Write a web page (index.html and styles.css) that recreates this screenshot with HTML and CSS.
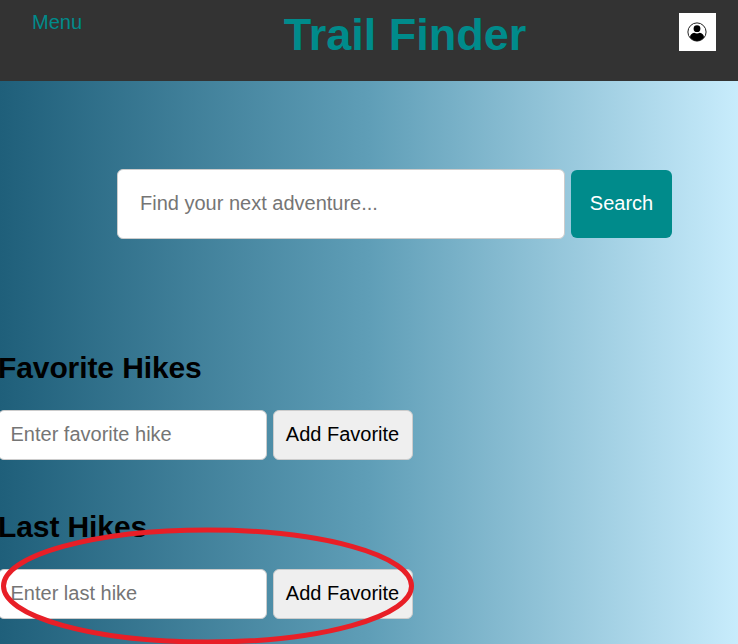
FILE: index.html
```html
<!DOCTYPE html>
<html lang="en">
<head>
<meta charset="utf-8">
<title>Trail Finder</title>
<link rel="stylesheet" href="styles.css">
</head>
<body>
<header class="topbar">
  <a class="menu">Menu</a>
  <h1 class="title">Trail Finder</h1>
  <button class="account" aria-label="Account">
    <svg class="account-icon" viewBox="0 0 20 20">
      <circle cx="10" cy="10" r="9.1" fill="none" stroke="#222" stroke-width="1"/>
      <circle cx="10" cy="6.7" r="3.4"/>
      <path d="M3 15.6C3 12.5 5 11 7.2 10.7Q10 12.2 12.8 10.7C15 11 17 12.5 17 15.6Q14 19 10 19T3 15.6Z"/>
    </svg>
  </button>
</header>
<main>
  <form class="search">
    <input class="field search-field" type="text" placeholder="Find your next adventure...">
    <button class="search-button" type="button">Search</button>
  </form>
  <section class="hikes">
    <h2 class="heading">Favorite Hikes</h2>
    <div class="row">
      <input class="field hike-field" type="text" placeholder="Enter favorite hike">
      <button class="add-button" type="button">Add Favorite</button>
    </div>
  </section>
  <section class="hikes">
    <h2 class="heading">Last Hikes</h2>
    <div class="row">
      <input class="field hike-field" type="text" placeholder="Enter last hike">
      <button class="add-button" type="button">Add Favorite</button>
    </div>
  </section>
</main>
<svg class="highlight" viewBox="0 0 414 118">
  <ellipse cx="207.5" cy="59" rx="204" ry="56" fill="none" stroke="#e81f27" stroke-width="5"/>
</svg>
</body>
</html>
```
FILE: styles.css
```css
* {
  box-sizing: border-box;
}

body {
  position: relative;
  height: 644px;
  margin: 0;
  overflow: hidden;
  font: 20px/24px "Liberation Sans", Arial, sans-serif;
  color: #000;
  background: linear-gradient(to right, #1f5f7a, #5f9eb7 50%, #c8ecfc);
}

.topbar {
  display: flex;
  justify-content: space-between;
  align-items: flex-start;
  height: 81px;
  padding: 10px 22px 0 32px;
  background: #333;
  color: #008b8b;
}

.menu {
  width: 50px;
}

.title {
  margin: -1px 0 0 49px;
  font-size: 45px;
  line-height: 52px;
  white-space: nowrap;
}

.account {
  display: flex;
  align-items: center;
  justify-content: center;
  width: 37px;
  height: 38px;
  margin-top: 3px;
  padding: 0 1px 0 0;
  border: 0;
  background: #fff;
}

.account-icon {
  width: 20px;
  height: 20px;
}

.search {
  display: flex;
  align-items: center;
  gap: 6px;
  margin: 88px 0 0 117px;
}

.field,
.search-button,
.add-button {
  font: inherit;
  border: 1px solid #ccc;
  border-radius: 6px;
}

.field {
  background: #fff;
}

.field::placeholder {
  color: #757575;
}

.search-field {
  width: 448px;
  height: 70px;
  padding: 0 22px 2px;
}

.search-button {
  width: 101px;
  height: 68px;
  padding: 0 0 2px;
  border: 0;
  color: #fff;
  background: #008b8b;
}

.hikes {
  height: 159px;
  margin-left: -2px;
}

.search + .hikes {
  margin-top: 111px;
}

.heading {
  margin: 0 0 25px;
  font-size: 30px;
  line-height: 35px;
  letter-spacing: -0.1px;
}

.row {
  display: flex;
  gap: 6px;
}

.hike-field {
  width: 269px;
  height: 50px;
  padding: 0 11.5px 2px;
}

.add-button {
  width: 140px;
  height: 50px;
  padding: 0 1px 2px 0;
  color: #000;
  background: #efefef;
}

.highlight {
  position: absolute;
  left: 0;
  top: 527px;
  width: 414px;
  height: 118px;
  pointer-events: none;
}
```
